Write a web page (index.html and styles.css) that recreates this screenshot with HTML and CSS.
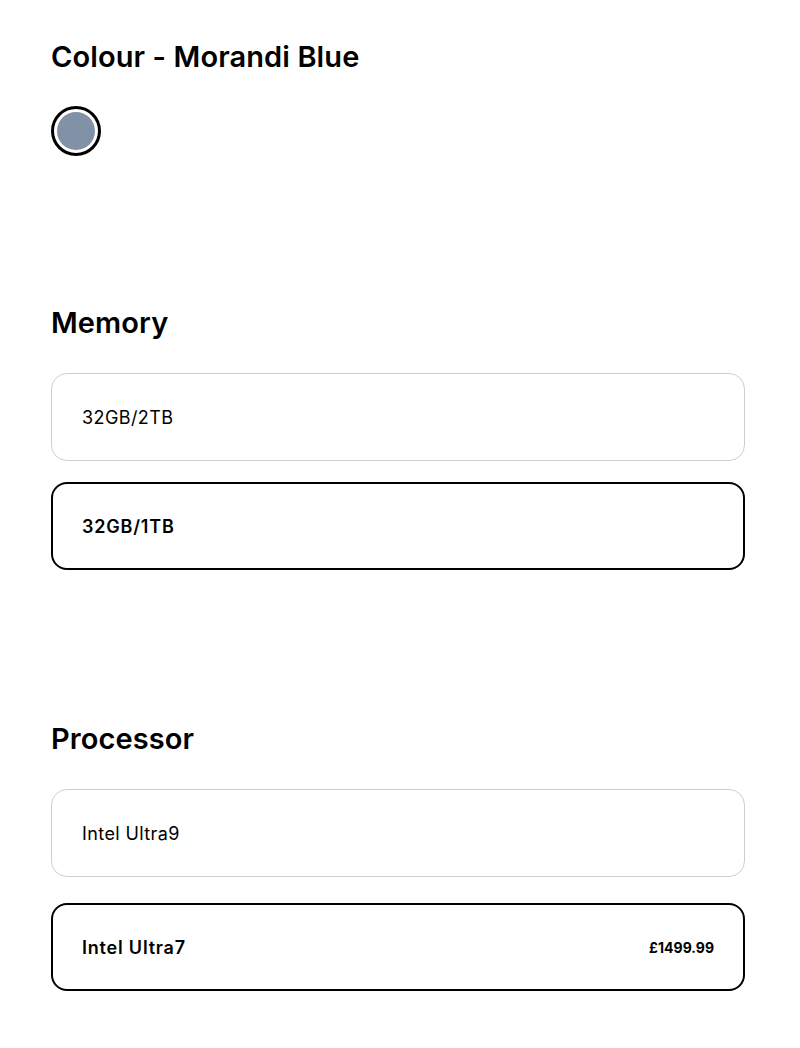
FILE: index.html
```html
<!DOCTYPE html>
<html>
<head>
<meta charset="utf-8">
<link rel="stylesheet" href="styles.css">
</head>
<body>
<div class="page">
  <section class="group group-colour">
    <h2 class="title">Colour - Morandi Blue</h2>
    <div class="swatches">
      <span class="swatch selected"><span class="swatch-fill"></span></span>
    </div>
  </section>
  <section class="group group-memory">
    <h2 class="title">Memory</h2>
    <div class="options">
      <div class="option"><span class="label">32GB/2TB</span></div>
      <div class="option selected"><span class="label">32GB/1TB</span></div>
    </div>
  </section>
  <section class="group group-processor">
    <h2 class="title">Processor</h2>
    <div class="options options-wide">
      <div class="option"><span class="label">Intel Ultra9</span></div>
      <div class="option selected"><span class="label">Intel Ultra7</span><span class="price">£1499.99</span></div>
    </div>
  </section>
</div>
</body>
</html>
```
FILE: styles.css
```css
* { box-sizing: border-box; }
html, body { margin: 0; padding: 0; background: #fff; }
body { font-family: Inter, "Noto Sans", sans-serif; color: #000; }
.page { padding: 40px 55px 0 51px; }
.title { margin: 0; font-size: 29px; font-weight: 600; line-height: 34px; letter-spacing: 0.1px; }
.group-colour { height: 266px; }
.swatches { margin-top: 32px; display: flex; }
.swatch { width: 50px; height: 50px; border-radius: 50%; border: 3px solid #000; padding: 3px; display: flex; }
.swatch-fill { flex: 1; border-radius: 50%; background: #8192a6; }
.group-memory { height: 416px; }
.options { margin-top: 33px; display: flex; flex-direction: column; gap: 21px; }
.options-wide { gap: 26px; }
.option { height: 88px; border: 1px solid #cfcfcf; border-radius: 16px; padding: 0 30px; display: flex; align-items: center; justify-content: space-between; font-size: 18px; font-weight: 400; letter-spacing: 0.4px; }
.option.selected { border: 2px solid #000; padding: 0 29px; font-weight: 600; letter-spacing: 0.8px; }
.price { font-size: 14px; font-weight: 700; letter-spacing: 0; }
```
